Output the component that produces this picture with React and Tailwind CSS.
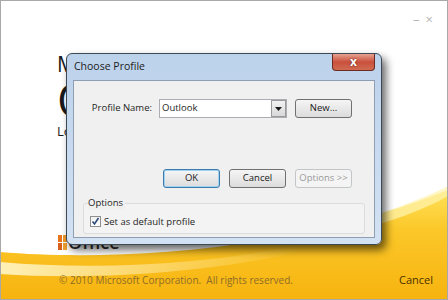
const ui = { fontFamily: '"Open Sans", "Noto Sans", Arial, sans-serif' }

function Swoosh() {
  return (
    <svg className="absolute inset-0" width="448" height="300" viewBox="0 0 448 300">
      <defs>
        <linearGradient id="gold" x1="0" y1="0" x2="0" y2="1">
          <stop offset="0" stopColor="#ffe25a" />
          <stop offset="0.35" stopColor="#fbc82a" />
          <stop offset="1" stopColor="#f7b30e" />
        </linearGradient>
        <linearGradient id="streak" x1="0" y1="0" x2="1" y2="0">
          <stop offset="0" stopColor="#fff6c8" stopOpacity="0.9" />
          <stop offset="1" stopColor="#fff6c8" stopOpacity="0" />
        </linearGradient>
      </defs>
      <path d="M0 252 C 120 262, 300 250, 448 190 L448 300 L0 300 Z" fill="url(#gold)" />
      <path d="M0 262 C 90 270, 200 266, 300 245 L300 252 C 200 274, 90 280, 0 274 Z" fill="url(#streak)" />
      <path d="M330 228 C 380 215, 420 200, 448 186 L448 196 C 420 212, 380 226, 330 236 Z" fill="#fff3b0" opacity="0.7" />
    </svg>
  )
}

function Btn({ children, primary, disabled }) {
  return (
    <div
      className={
        'w-[57px] h-[19px] rounded-[3px] border flex items-center justify-center whitespace-nowrap text-[9.5px] ' +
        (disabled
          ? 'border-[#c3c6c9] bg-[#f4f4f4] text-[#9a9a9a]'
          : primary
            ? 'border-[#3d7bad] bg-gradient-to-b from-[#f5f5f5] to-[#dcdcdc] text-[#1a1a1a] shadow-[inset_0_0_0_1px_#9fd3ef]'
            : 'border-[#707070] bg-gradient-to-b from-[#f5f5f5] to-[#dcdcdc] text-[#1a1a1a]')
      }
    >
      {children}
    </div>
  )
}

export default function App() {
  return (
    <div className="relative w-[448px] h-[300px] overflow-hidden bg-white" style={ui}>
      <Swoosh />
      <div className="absolute inset-0 border border-[#a8a8a8] pointer-events-none" />

      {/* window controls */}
      <div className="absolute top-[10px] right-[15px] flex items-center gap-[6px] text-[#b5b5b5] text-[13px]">
        <span>–</span>
        <span>×</span>
      </div>

      {/* splash text, mostly hidden behind the dialog */}
      <div className="absolute left-[57px] top-[54px] w-[11px] h-[90px] overflow-hidden">
        <div className="text-[#1a1a1a] leading-none whitespace-nowrap">
          <div className="text-[21px]">Microsoft®</div>
          <div className="text-[46px] mt-[1px]">Outlook® 2010</div>
          <div className="text-[13px] mt-[3px]">Loading Profile...</div>
        </div>
      </div>
      <div className="absolute left-[58px] top-[233px] flex items-center gap-[1px]">
        <div className="grid grid-cols-2 gap-[1px] w-[9px] h-[15px]">
          <div className="bg-[#e8731a]" />
          <div className="bg-[#f39a2a]" />
          <div className="bg-[#d9601a]" />
          <div className="bg-[#f0a030]" />
        </div>
        <span className="text-[18px] leading-none text-[#2a2a2a] font-semibold">Office</span>
      </div>

      {/* footer */}
      <div className="absolute left-[59px] right-[15px] top-[272px] flex justify-between items-center">
        <span className="text-[10px] text-[#8e6c28]">© 2010 Microsoft Corporation.&nbsp; All rights reserved.</span>
        <span className="text-[11px] text-[#4a3200]">Cancel</span>
      </div>

      {/* Choose Profile dialog */}
      <div className="absolute left-[66px] top-[53px] w-[316px] h-[192px] rounded-[6px] border border-[#3d4a56] bg-gradient-to-b from-[#bcd2eb] to-[#d3e2f3] shadow-[4px_5px_8px_rgba(0,0,0,0.6)] flex flex-col px-[6px] pb-[6px]">
        <div className="relative h-[26px] pt-[5px] pl-[1px]">
          <div className="text-[10.5px] text-[#1b1b1b] leading-[14px]">Choose Profile</div>
          <div className="absolute right-[0px] top-0 w-[43px] h-[17px] rounded-b-[4px] border border-[#6d2a22] border-t-0 bg-gradient-to-b from-[#e6a090] via-[#c9503d] to-[#d06b52] flex items-center justify-center">
            <span className="text-white text-[12px] font-bold leading-none [text-shadow:0_0_2px_#5a1a10]">x</span>
          </div>
        </div>
        <div className="flex-1 bg-[#f0f0f0] border border-[#8e9fb3] flex flex-col">
          <div className="flex items-center mt-[18px] h-[19px]">
            <span className="w-[78px] text-right whitespace-nowrap text-[9.5px] text-[#1e1e1e]">Profile Name:</span>
            <div className="ml-[7px] w-[128px] h-[19px] border border-[#abadb3] bg-white flex items-center">
              <span className="flex-1 text-[9.5px] text-[#1e1e1e] pl-[2px]">Outlook</span>
              <div className="w-[15px] h-[17px] border border-[#9a9a9a] bg-gradient-to-b from-[#f2f2f2] to-[#d8d8d8] flex items-center justify-center">
                <svg width="7" height="4" viewBox="0 0 7 4"><path d="M0 0h7L3.5 4z" fill="#1a1a1a" /></svg>
              </div>
            </div>
            <div className="ml-[8px]">
              <Btn>New...</Btn>
            </div>
          </div>
          <div className="flex items-center gap-[9px] mt-[51px] ml-[89px]">
            <Btn primary>OK</Btn>
            <Btn>Cancel</Btn>
            <Btn disabled>Options &gt;&gt;</Btn>
          </div>
          <div className="relative mx-[9px] mt-[15px] h-[31px] rounded-[3px] border border-[#dcdcdc] bg-[#f3f3f3]">
            <span className="absolute left-[4px] top-[-8px] bg-[#f0f0f0] pr-[2px] text-[9.5px] text-[#1e1e1e] leading-[14px]">Options</span>
            <div className="flex items-center mt-[12px] ml-[6px] gap-[3px]">
              <div className="w-[11px] h-[11px] border border-[#8f8f8f] bg-gradient-to-b from-[#f0f0f0] to-[#ffffff] flex items-center justify-center">
                <svg width="9" height="9" viewBox="0 0 9 9"><path d="M1.5 4.5 L3.5 7 L7.5 1" fill="none" stroke="#2c4a7a" strokeWidth="1.6" /></svg>
              </div>
              <span className="text-[9.5px] text-[#1e1e1e] leading-none">Set as default profile</span>
            </div>
          </div>
        </div>
      </div>
    </div>
  )
}
